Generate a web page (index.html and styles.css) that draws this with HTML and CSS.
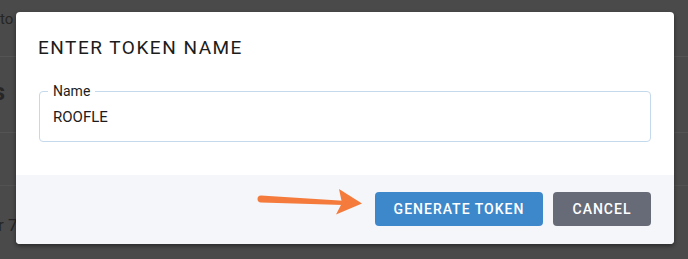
FILE: index.html
```html
<!DOCTYPE html>
<html lang="en">
<head>
<meta charset="utf-8">
<title>Enter token name</title>
<link rel="stylesheet" href="styles.css">
</head>
<body>
<div class="page">
  <div class="crumb">Histo</div>
  <div class="heading">Ss</div>
  <div class="filler"></div>
  <div class="row">r 7.</div>
</div>

<div class="modal" role="dialog" aria-labelledby="modal-title">
  <div class="modal-header">
    <h2 class="modal-title" id="modal-title">ENTER TOKEN NAME</h2>
  </div>
  <div class="modal-body">
    <fieldset class="field">
      <legend class="field-label">Name</legend>
      <input class="field-input" type="text" value="ROOFLE">
    </fieldset>
  </div>
  <div class="modal-footer">
    <button class="btn btn-primary" type="button">GENERATE TOKEN</button>
    <button class="btn btn-secondary" type="button">CANCEL</button>
  </div>
</div>

<svg class="annot-arrow" width="112" height="35" viewBox="0 0 112 35" aria-hidden="true">
  <path d="M6 10.5 L88 15.8 L88 20 L6 17.5 A3.5 3.5 0 0 1 6 10.5 Z" fill="#f47b3b"/>
  <path d="M84 4 L107 18.5 L81 29.5 L87 18 Z" fill="#f47b3b"/>
</svg>
</body>
</html>
```

FILE: styles.css
```css
html, body {
  margin: 0;
  padding: 0;
}
body {
  width: 688px;
  height: 259px;
  overflow: hidden;
  background: #4a4a4a;
  font-family: Roboto, "Noto Sans", "Liberation Sans", sans-serif;
  position: relative;
}

/* dimmed page behind the dialog */
.page {
  margin-left: -22px;
  color: #262626;
}
.crumb {
  height: 57px;
  border-bottom: 1px solid #545454;
  font-size: 15px;
  line-height: 38px;
  box-sizing: border-box;
}
.heading {
  height: 76px;
  border-bottom: 1px solid #545454;
  font-size: 24px;
  font-weight: 700;
  line-height: 70px;
  box-sizing: border-box;
}
.filler {
  height: 53px;
  border-bottom: 1px solid #525252;
  box-sizing: border-box;
}
.row {
  font-size: 17px;
  line-height: 34px;
  padding: 22px 0 0 20px;
}

/* dialog */
.modal {
  position: absolute;
  left: 16px;
  top: 12px;
  width: 658px;
  height: 232px;
  background: #ffffff;
  border-radius: 4px;
  box-shadow: 0 2px 4px rgba(0, 0, 0, 0.45);
  display: flex;
  flex-direction: column;
  overflow: hidden;
}
.modal-header {
  padding: 23px 22px 0;
  height: 71px;
  box-sizing: border-box;
}
.modal-title {
  margin: 0;
  font-size: 19px;
  font-weight: 400;
  line-height: 25px;
  letter-spacing: 1.5px;
  color: #1c1c1c;
}
.modal-body {
  padding: 0 23px;
  height: 92px;
  box-sizing: border-box;
}
.field {
  margin: 0;
  padding: 0 8px;
  border: 1px solid #c4d9ec;
  border-radius: 4px;
  height: 59px;
  box-sizing: border-box;
}
.field-label {
  padding: 0 5px;
  font-size: 14px;
  line-height: 16px;
  color: #1c1c1c;
}
.field-input {
  display: block;
  width: 100%;
  box-sizing: border-box;
  border: 0;
  outline: none;
  background: transparent;
  padding: 8px 5px 0;
  font-family: inherit;
  font-size: 15px;
  line-height: 20px;
  color: #1c1c1c;
}
.modal-footer {
  flex: 1;
  background: #f5f6f9;
  display: flex;
  justify-content: flex-end;
  align-items: center;
  gap: 10px;
  padding: 0 23px 1px;
}
.btn {
  height: 34px;
  border: 0;
  border-radius: 4px;
  color: #ffffff;
  font-family: inherit;
  font-size: 14px;
  font-weight: 500;
  letter-spacing: 1px;
  padding: 0;
}
.btn-primary {
  width: 168px;
  background: #3d88cb;
}
.btn-secondary {
  width: 98px;
  background: #676b78;
}

/* annotation arrow drawn over the screenshot */
.annot-arrow {
  position: absolute;
  left: 255px;
  top: 185px;
}
```
